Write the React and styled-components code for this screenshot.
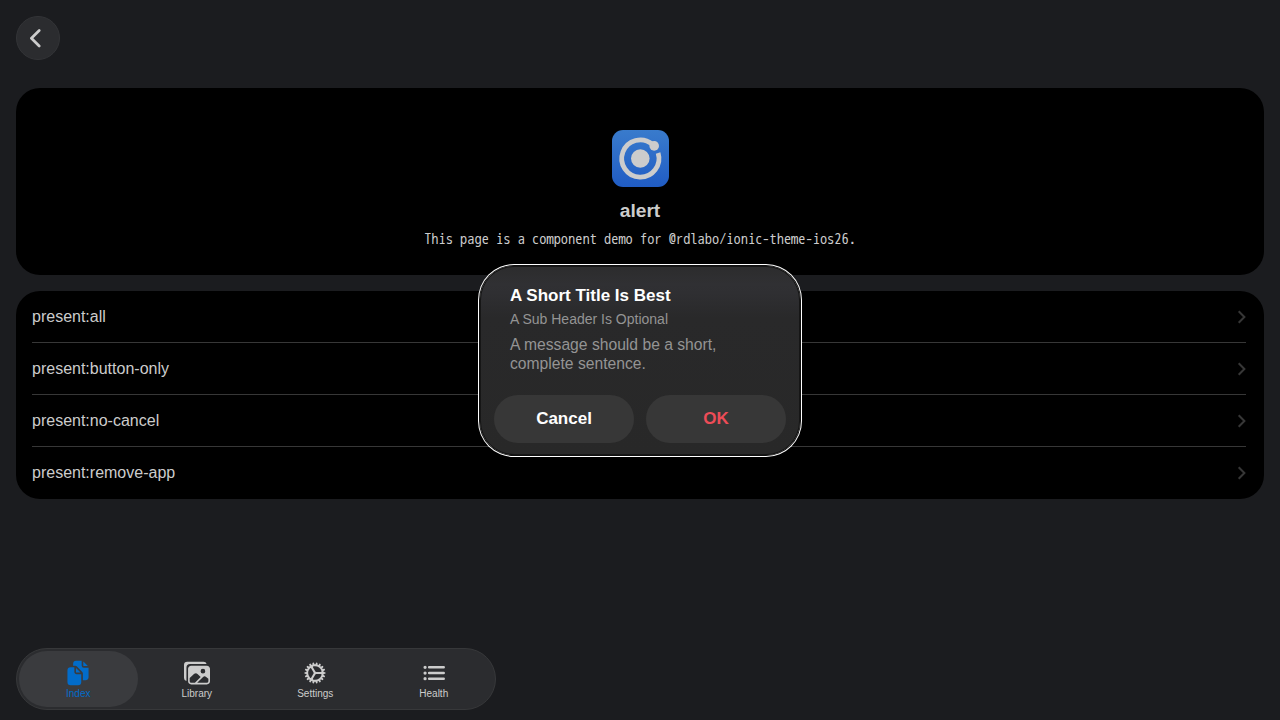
import React from 'react';
import styled, { createGlobalStyle } from 'styled-components';
import { IoDocuments, IoImages, IoCog, IoList } from 'react-icons/io5';

const Global = createGlobalStyle`
  * { box-sizing: border-box; }
  html, body { margin: 0; height: 100%; overflow: hidden; background: #1b1c1f; }
  body { font-family: "Liberation Sans", Arial, sans-serif; color: #cccccc; }
  #root { height: 100%; }
  button { font: inherit; border: 0; padding: 0; margin: 0; color: inherit; }
`;

const Page = styled.div`
  position: relative;
  display: flex;
  flex-direction: column;
  height: 720px;
  padding: 16px 16px 10px;
`;

const BackButton = styled.button`
  display: flex;
  align-items: center;
  justify-content: center;
  width: 44px;
  height: 44px;
  padding-right: 6px;
  border-radius: 50%;
  background: #2b2c2f;
  border: 1px solid #333437;
  svg { width: 12px; height: 20px; }
`;

const Card = styled.section`
  background: #000;
  border-radius: 24px;
`;

const Intro = styled(Card)`
  display: flex;
  flex-direction: column;
  align-items: center;
  height: 187px;
  margin-top: 28px;
  padding-top: 42px;
`;

const Logo = styled.svg`
  display: block;
  width: 57px;
  height: 57px;
`;

const Title = styled.h1`
  margin: 13px 0 0;
  font-size: 19.2px;
  line-height: 22px;
  font-weight: 700;
`;

const Description = styled.p`
  margin: 7px 0 0;
  font-family: "WenQuanYi Zen Hei Mono", "Noto Sans Mono CJK JP", monospace;
  font-size: 14.4px;
  line-height: 20px;
  white-space: nowrap;
`;

const List = styled(Card)`
  height: 208px;
  margin-top: 16px;
  padding: 0 18px 0 16px;
`;

const Item = styled.div`
  display: flex;
  align-items: center;
  justify-content: space-between;
  height: 52px;
  font-size: 16px;
  border-bottom: 1px solid #373737;
  &:last-child { border-bottom-color: transparent; }
  svg { width: 9px; height: 14px; margin-top: 1px; color: #373737; }
`;

const TabBar = styled.nav`
  display: flex;
  width: 480px;
  height: 62px;
  margin-top: auto;
  padding: 2px;
  border: 1px solid #37383a;
  border-radius: 31px;
  background: #2b2c2f;
`;

const Tab = styled.button`
  flex: 1;
  display: flex;
  flex-direction: column;
  align-items: center;
  padding-top: 9px;
  border-radius: 28px;
  background: ${p => (p.$active ? '#3a3b3e' : 'transparent')};
  color: ${p => (p.$active ? '#026cca' : '#cccccc')};
  svg { width: 26px; height: 26px; }
`;

const TabLabel = styled.span`
  margin-top: 2px;
  font-size: 10px;
  line-height: 12px;
`;

const Alert = styled.div`
  position: absolute;
  left: 480px;
  top: 266px;
  width: 320px;
  height: 189px;
  display: flex;
  flex-direction: column;
  padding: 19px 14px 11px;
  border: 1px solid #161616;
  border-radius: 34px;
  background: linear-gradient(#2c2c2d, #303033 9%, #2f2f32 14%, #29292a 27%, #282828);
  box-shadow: 0 0 0 1px #101010, 0 0 0 2px #fff;
`;

const AlertHead = styled.div`
  padding: 0 15px;
`;

const AlertTitle = styled.h2`
  margin: 0;
  font-size: 17px;
  line-height: 20px;
  color: #fff;
`;

const AlertSub = styled.h3`
  margin: 5px 0 0;
  font-size: 14px;
  line-height: 16px;
  font-weight: 400;
  color: #949494;
`;

const AlertMessage = styled.p`
  margin: 8px 0 0;
  font-size: 15.68px;
  line-height: 19px;
  color: #949494;
`;

const Actions = styled.div`
  display: flex;
  gap: 12px;
  margin: auto -1px 0;
`;

const Action = styled.button`
  flex: 1;
  height: 48px;
  border-radius: 24px;
  background: #373737;
  font-size: 17px;
  font-weight: 700;
  color: ${p => (p.$danger ? '#ed4c57' : '#fff')};
`;

const items = ['present:all', 'present:button-only', 'present:no-cancel', 'present:remove-app'];
const tabs = [
  ['Index', IoDocuments],
  ['Library', IoImages],
  ['Settings', IoCog],
  ['Health', IoList],
];

const BackIcon = () => (
  <svg viewBox="0 0 12 20" fill="none" stroke="currentColor" strokeWidth="2.7" strokeLinecap="round" strokeLinejoin="round">
    <path d="M10.2 2.5L2.4 10.2L10.2 18" />
  </svg>
);

const DetailIcon = () => (
  <svg viewBox="0 0 9 14" fill="none" stroke="currentColor" strokeWidth="2">
    <path d="M1.7 1.2L7.4 7L1.7 12.8" />
  </svg>
);

export default function App() {
  return (
    <Page>
      <Global />
      <BackButton aria-label="Back"><BackIcon /></BackButton>
      <Intro>
        <Logo viewBox="0 0 57 57">
          <defs>
            <linearGradient id="tile" x1="0" y1="0" x2="0" y2="1">
              <stop offset="0" stopColor="#397bcc" />
              <stop offset="1" stopColor="#205cc4" />
            </linearGradient>
          </defs>
          <rect width="57" height="57" rx="11" fill="url(#tile)" />
          <circle cx="28.3" cy="28.5" r="9.3" fill="#ccc" />
          <path d="M40.2 14.2A18.6 18.6 0 1 0 46.1 23" fill="none" stroke="#ccc" strokeWidth="4.8" />
          <circle cx="42.2" cy="15.9" r="4.8" fill="#ccc" />
        </Logo>
        <Title>alert</Title>
        <Description>This page is a component demo for @rdlabo/ionic-theme-ios26.</Description>
      </Intro>
      <List>
        {items.map(label => (
          <Item key={label}><span>{label}</span><DetailIcon /></Item>
        ))}
      </List>
      <TabBar>
        {tabs.map(([label, Icon], i) => (
          <Tab key={label} $active={i === 0}><Icon /><TabLabel>{label}</TabLabel></Tab>
        ))}
      </TabBar>
      <Alert role="alertdialog">
        <AlertHead>
          <AlertTitle>A Short Title Is Best</AlertTitle>
          <AlertSub>A Sub Header Is Optional</AlertSub>
          <AlertMessage>A message should be a short, complete sentence.</AlertMessage>
        </AlertHead>
        <Actions>
          <Action>Cancel</Action>
          <Action $danger>OK</Action>
        </Actions>
      </Alert>
    </Page>
  );
}
